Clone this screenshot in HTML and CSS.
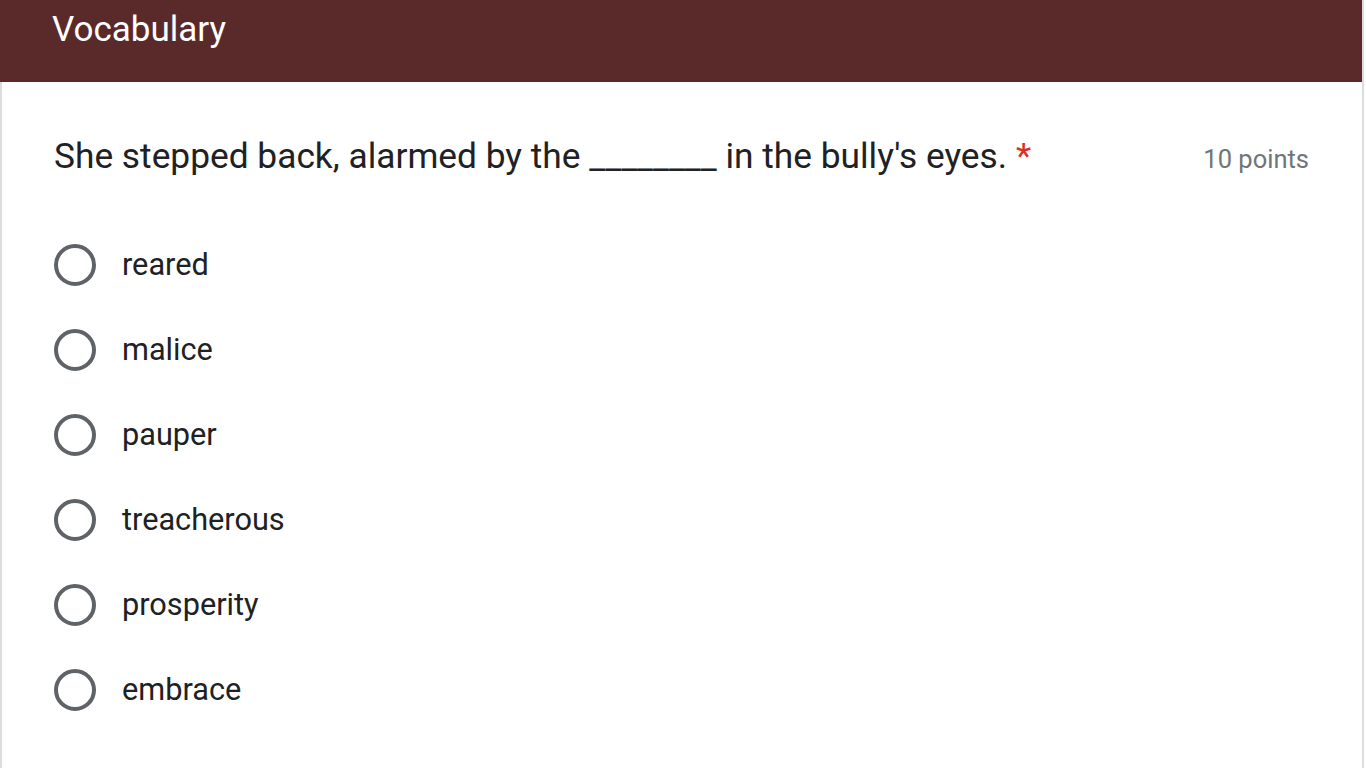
FILE: index.html
```html
<!DOCTYPE html>
<html lang="en">
<head>
<meta charset="utf-8">
<title>Vocabulary</title>
<link rel="stylesheet" href="styles.css">
</head>
<body>
<div class="page">
  <header class="section-head">
    <h1 class="section-title">Vocabulary</h1>
  </header>
  <main class="card">
    <div class="question">
      <div class="question-text">She stepped back, alarmed by the ________ in the bully's eyes.<span class="req">*</span></div>
      <div class="points">10 points</div>
    </div>
    <div class="options">
      <label class="option"><span class="radio"></span><span class="opt-text">reared</span></label>
      <label class="option"><span class="radio"></span><span class="opt-text">malice</span></label>
      <label class="option"><span class="radio"></span><span class="opt-text">pauper</span></label>
      <label class="option"><span class="radio"></span><span class="opt-text">treacherous</span></label>
      <label class="option"><span class="radio"></span><span class="opt-text">prosperity</span></label>
      <label class="option"><span class="radio"></span><span class="opt-text">embrace</span></label>
    </div>
  </main>
</div>
</body>
</html>
```
FILE: styles.css
```css
html, body {
  margin: 0;
  padding: 0;
  background: #ffffff;
}
body {
  font-family: Roboto, "Liberation Sans", sans-serif;
  color: #202124;
  overflow: hidden;
}
.page {
  width: 1364px;
  height: 768px;
  border-right: 2px solid #dadce0;
  box-sizing: border-box;
}
.section-head {
  background: #5a2a2b;
  height: 82px;
  padding-left: 52px;
  box-sizing: border-box;
}
.section-title {
  margin: 0;
  font-family: Roboto, "Liberation Sans", sans-serif;
  font-weight: 400;
  font-size: 35px;
  line-height: 42px;
  padding-top: 9px;
  color: #ffffff;
  letter-spacing: 0;
}
.card {
  border-left: 2px solid #dadce0;
  height: 686px;
  box-sizing: border-box;
  padding: 54px 53px 0 52px;
}
.question {
  display: flex;
  align-items: baseline;
  justify-content: space-between;
}
.question-text {
  font-size: 35.3px;
  line-height: 40px;
  color: #202124;
}
.req {
  color: #d93025;
  margin-left: 9px;
}
.points {
  font-size: 25.5px;
  color: #70757a;
}
.options {
  display: flex;
  flex-direction: column;
  margin-top: 46px;
}
.option {
  display: flex;
  align-items: center;
  height: 85px;
}
.radio {
  width: 42px;
  height: 42px;
  border: 4px solid #5f6368;
  border-radius: 50%;
  box-sizing: border-box;
  flex: none;
}
.opt-text {
  margin-left: 26px;
  font-size: 30.7px;
  line-height: 36px;
  color: #202124;
}
```
